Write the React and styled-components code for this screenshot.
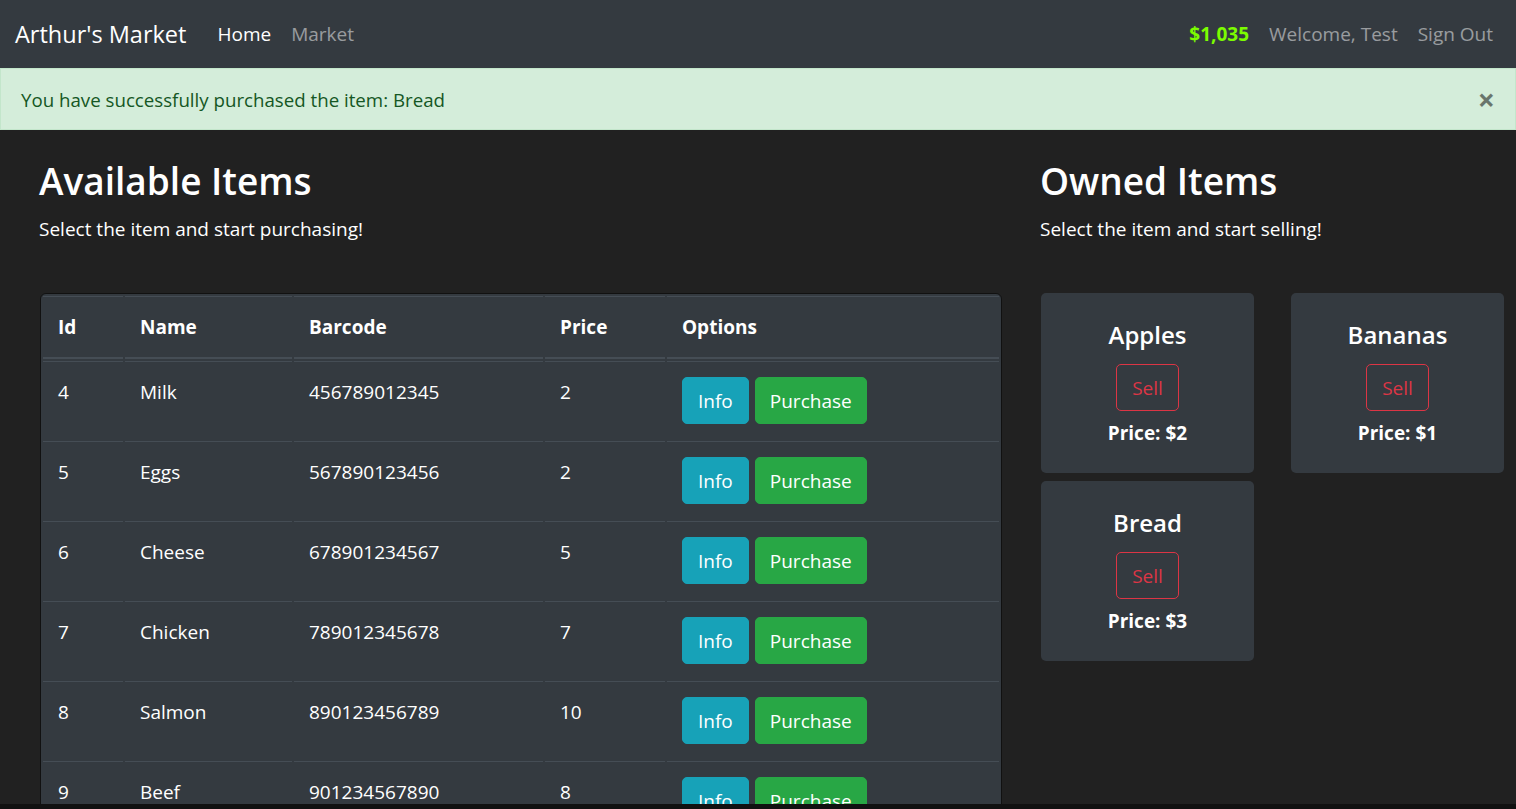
import styled, { createGlobalStyle } from 'styled-components'

const GlobalStyle = createGlobalStyle`
  * { box-sizing: border-box; }
  body {
    margin: 0;
    background: #212121;
    color: #fff;
    font-family: "Open Sans", "Noto Sans", sans-serif;
    font-size: 19px;
    line-height: 30px;
  }
`

const colors = {
  dark: '#343a40',
  line: '#454d55',
  info: '#17a2b8',
  success: '#28a745',
  danger: '#dc3545',
}

const Nav = styled.nav`
  height: 68px;
  background: ${colors.dark};
  display: flex;
  align-items: center;
  padding: 0 13px 0 15px;
`

const Brand = styled.a`
  font-size: 23.5px;
  color: #fff;
  margin-right: 21px;
  text-decoration: none;
`

const NavGroup = styled.div`
  display: flex;
  align-items: center;
  ${(props) => props.$right && 'margin-left: auto;'}
`

const NavLink = styled.a`
  padding: 0 10px;
  color: ${(props) => (props.$active ? '#fff' : 'rgba(255, 255, 255, 0.5)')};
  text-decoration: none;
`

const Budget = styled.span`
  color: #7cfc00;
  font-weight: 700;
  padding: 0 10px;
`

const Alert = styled.div`
  height: 62px;
  display: flex;
  align-items: center;
  justify-content: space-between;
  padding: 1px 20px 0;
  background: #d4edda;
  border: 1px solid #c3e6cb;
  color: #155724;
  font-size: 18.7px;
`

const Close = styled.button`
  background: none;
  border: none;
  padding: 0;
  font-family: inherit;
  font-size: 30px;
  font-weight: 700;
  color: #000;
  opacity: 0.5;
  line-height: 30px;
`

const Main = styled.main`
  display: grid;
  grid-template-columns: 962px 1fr;
  column-gap: 39px;
  padding: 27px 12px 0 40px;
`

const Title = styled.h2`
  margin: 0 0 0 -1px;
  font-size: 37px;
  font-weight: 600;
  line-height: 48px;
`

const Lead = styled.p`
  margin: 9px 0 49px -1px;
`

const TableWrap = styled.div`
  background: ${colors.dark};
  border: 1px solid #111;
  border-radius: 6px;
  overflow: hidden;
`

const Table = styled.table`
  width: 100%;
  border-collapse: separate;
  border-spacing: 2px;
  text-align: left;
`

const Th = styled.th`
  padding: 15px;
  font-weight: 700;
  border-top: 1px solid ${colors.line};
  border-bottom: 2px solid ${colors.line};
  width: ${(props) => props.$w || 'auto'};
`

const Td = styled.td`
  padding: 15px;
  vertical-align: top;
  border-top: 1px solid ${colors.line};
`

const Options = styled.div`
  display: flex;
  gap: 6px;
  height: 47px;
`

const Button = styled.button`
  font-family: inherit;
  font-size: 19px;
  line-height: 30px;
  padding: 7.5px ${(props) => props.$px || 15}px;
  height: 47px;
  border-radius: 5px;
  border: 1px solid ${(props) => props.$color};
  color: ${(props) => (props.$outline ? props.$color : '#fff')};
  background: ${(props) => (props.$outline ? 'transparent' : props.$color)};
`

const Cards = styled.div`
  display: grid;
  grid-template-columns: 213px 213px;
  column-gap: 37px;
  row-gap: 8px;
`

const Card = styled.div`
  background: ${colors.dark};
  border-radius: 5px;
  padding: 27px 25px 25px;
  text-align: center;
`

const CardTitle = styled.h5`
  margin: 0 0 14px;
  font-size: 24px;
  font-weight: 600;
  line-height: 30px;
`

const CardPrice = styled.p`
  margin: 7px 0 0;
  font-weight: 700;
`

const BottomEdge = styled.div`
  position: fixed;
  left: 0;
  right: 0;
  bottom: 0;
  height: 5px;
  background: #111;
`

const items = [
  { id: 4, name: 'Milk', barcode: '456789012345', price: 2 },
  { id: 5, name: 'Eggs', barcode: '567890123456', price: 2 },
  { id: 6, name: 'Cheese', barcode: '678901234567', price: 5 },
  { id: 7, name: 'Chicken', barcode: '789012345678', price: 7 },
  { id: 8, name: 'Salmon', barcode: '890123456789', price: 10 },
  { id: 9, name: 'Beef', barcode: '901234567890', price: 8 },
]

const owned = [
  { name: 'Apples', price: 2 },
  { name: 'Bananas', price: 1 },
  { name: 'Bread', price: 3 },
]

function App() {
  return (
    <>
      <GlobalStyle />
      <Nav>
        <Brand href="#">Arthur's Market</Brand>
        <NavGroup>
          <NavLink href="#" $active>Home</NavLink>
          <NavLink href="#">Market</NavLink>
        </NavGroup>
        <NavGroup $right>
          <Budget>$1,035</Budget>
          <NavLink href="#">Welcome, Test</NavLink>
          <NavLink href="#">Sign Out</NavLink>
        </NavGroup>
      </Nav>
      <Alert>
        <span>You have successfully purchased the item: Bread</span>
        <Close aria-label="Close">×</Close>
      </Alert>
      <Main>
        <section>
          <Title>Available Items</Title>
          <Lead>Select the item and start purchasing!</Lead>
          <TableWrap>
            <Table>
              <thead>
                <tr>
                  <Th $w="80px">Id</Th>
                  <Th $w="167px">Name</Th>
                  <Th $w="249px">Barcode</Th>
                  <Th $w="120px">Price</Th>
                  <Th>Options</Th>
                </tr>
              </thead>
              <tbody>
                {items.map((item) => (
                  <tr key={item.id}>
                    <Td>{item.id}</Td>
                    <Td>{item.name}</Td>
                    <Td>{item.barcode}</Td>
                    <Td>{item.price}</Td>
                    <Td>
                      <Options>
                        <Button $color={colors.info}>Info</Button>
                        <Button $color={colors.success} $px={14}>Purchase</Button>
                      </Options>
                    </Td>
                  </tr>
                ))}
              </tbody>
            </Table>
          </TableWrap>
        </section>
        <section>
          <Title>Owned Items</Title>
          <Lead>Select the item and start selling!</Lead>
          <Cards>
            {owned.map((item) => (
              <Card key={item.name}>
                <CardTitle>{item.name}</CardTitle>
                <Button $color={colors.danger} $outline>Sell</Button>
                <CardPrice>Price: ${item.price}</CardPrice>
              </Card>
            ))}
          </Cards>
        </section>
      </Main>
      <BottomEdge />
    </>
  )
}

export default App
